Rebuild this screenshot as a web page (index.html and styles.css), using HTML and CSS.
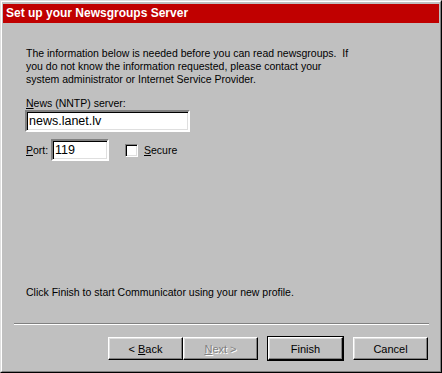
FILE: index.html
```html
<!DOCTYPE html>
<html lang="en">
<head>
  <meta charset="UTF-8">
  <title>Set up your Newsgroups Server</title>
  <link rel="stylesheet" href="styles.css">
</head>
<body>
  <div class="window">
    <div class="window-inner">
      <div class="banner">Set up your Newsgroups Server</div>

      <div class="content">
        <p class="intro">
          The information below is needed before you can read newsgroups.&nbsp; If<br>
          you do not know the information requested, please contact your<br>
          system administrator or Internet Service Provider.
        </p>

        <label class="field-label" for="server"><u>N</u>ews (NNTP) server:</label>
        <input class="field server-field" id="server" type="text" value="news.lanet.lv">

        <div class="port-row">
          <label class="port-label" for="port"><u>P</u>ort:</label>
          <input class="field port-field" id="port" type="text" value="119">
          <label class="check">
            <span class="check-box"></span>
            <span><u>S</u>ecure</span>
          </label>
        </div>

        <p class="finish-note">Click Finish to start Communicator using your new profile.</p>
      </div>

      <div class="separator"></div>

      <div class="buttons">
        <button class="btn">&lt; <u>B</u>ack</button>
        <button class="btn" disabled><u>N</u>ext &gt;</button>
        <button class="btn btn-default">Finish</button>
        <button class="btn">Cancel</button>
      </div>
    </div>
  </div>
</body>
</html>
```

FILE: styles.css
```css
* {
  margin: 0;
  padding: 0;
  box-sizing: border-box;
}

body {
  width: 442px;
  height: 373px;
  overflow: hidden;
  background: #c0c0c0;
  font-family: 'Liberation Sans', Arial, sans-serif;
  font-size: 10.5px;
  color: #000;
}

.window {
  width: 442px;
  height: 373px;
  border: 1px solid;
  border-color: #dfdfdf #000 #000 #dfdfdf;
}

.window-inner {
  height: 100%;
  border: 1px solid;
  border-color: #fff #808080 #808080 #fff;
}

.banner {
  margin: 2px 1px 0 1px;
  height: 19px;
  padding-left: 3px;
  background: #c00000;
  color: #fff;
  font-weight: bold;
  font-size: 12px;
  line-height: 19px;
}

.content {
  padding-left: 24px;
}

.intro {
  margin-top: 24px;
  line-height: 13px;
}

.field-label {
  display: block;
  margin-top: 11px;
  line-height: 13px;
}

.field {
  display: block;
  height: 22px;
  padding: 0 2px;
  border: 2px solid;
  border-color: #808080 #fff #fff #808080;
  box-shadow: inset 1px 1px 0 #000, inset -1px -1px 0 #dfdfdf;
  background: #fff;
  font-family: inherit;
  font-size: 12.5px;
  color: #000;
  outline: none;
}

.server-field {
  margin-left: -1px;
  width: 165px;
}

.port-row {
  display: flex;
  align-items: center;
  margin-top: 7px;
  height: 22px;
}

.port-label {
  width: 25px;
}

.port-field {
  width: 58px;
  height: 22px;
}

.check {
  display: flex;
  align-items: center;
  margin-left: 16px;
  gap: 6px;
}

.check-box {
  width: 13px;
  height: 13px;
  background: #fff;
  border: 1px solid;
  border-color: #808080 #fff #fff #808080;
  box-shadow: inset 1px 1px 0 #000, inset -1px -1px 0 #dfdfdf;
}

.finish-note {
  margin-top: 125px;
  line-height: 13px;
}

.separator {
  margin: 24px 11px 0 12px;
  height: 2px;
  border-top: 1px solid #808080;
  border-bottom: 1px solid #fff;
}

.buttons {
  display: flex;
  margin: 12px 0 0 106px;
}

.btn {
  width: 75px;
  height: 23px;
  background: #c0c0c0;
  border: 1px solid;
  border-color: #fff #000 #000 #fff;
  box-shadow: inset -1px -1px 0 #808080, inset 1px 1px 0 #dfdfdf;
  font-family: inherit;
  font-size: 11px;
  color: #000;
}

.btn:disabled {
  color: #808080;
  text-shadow: 1px 1px 0 #fff;
}

.btn-default {
  margin-left: 10px;
  margin-right: 10px;
  box-shadow: inset -1px -1px 0 #808080, inset 1px 1px 0 #dfdfdf, 0 0 0 1px #000;
}
```
